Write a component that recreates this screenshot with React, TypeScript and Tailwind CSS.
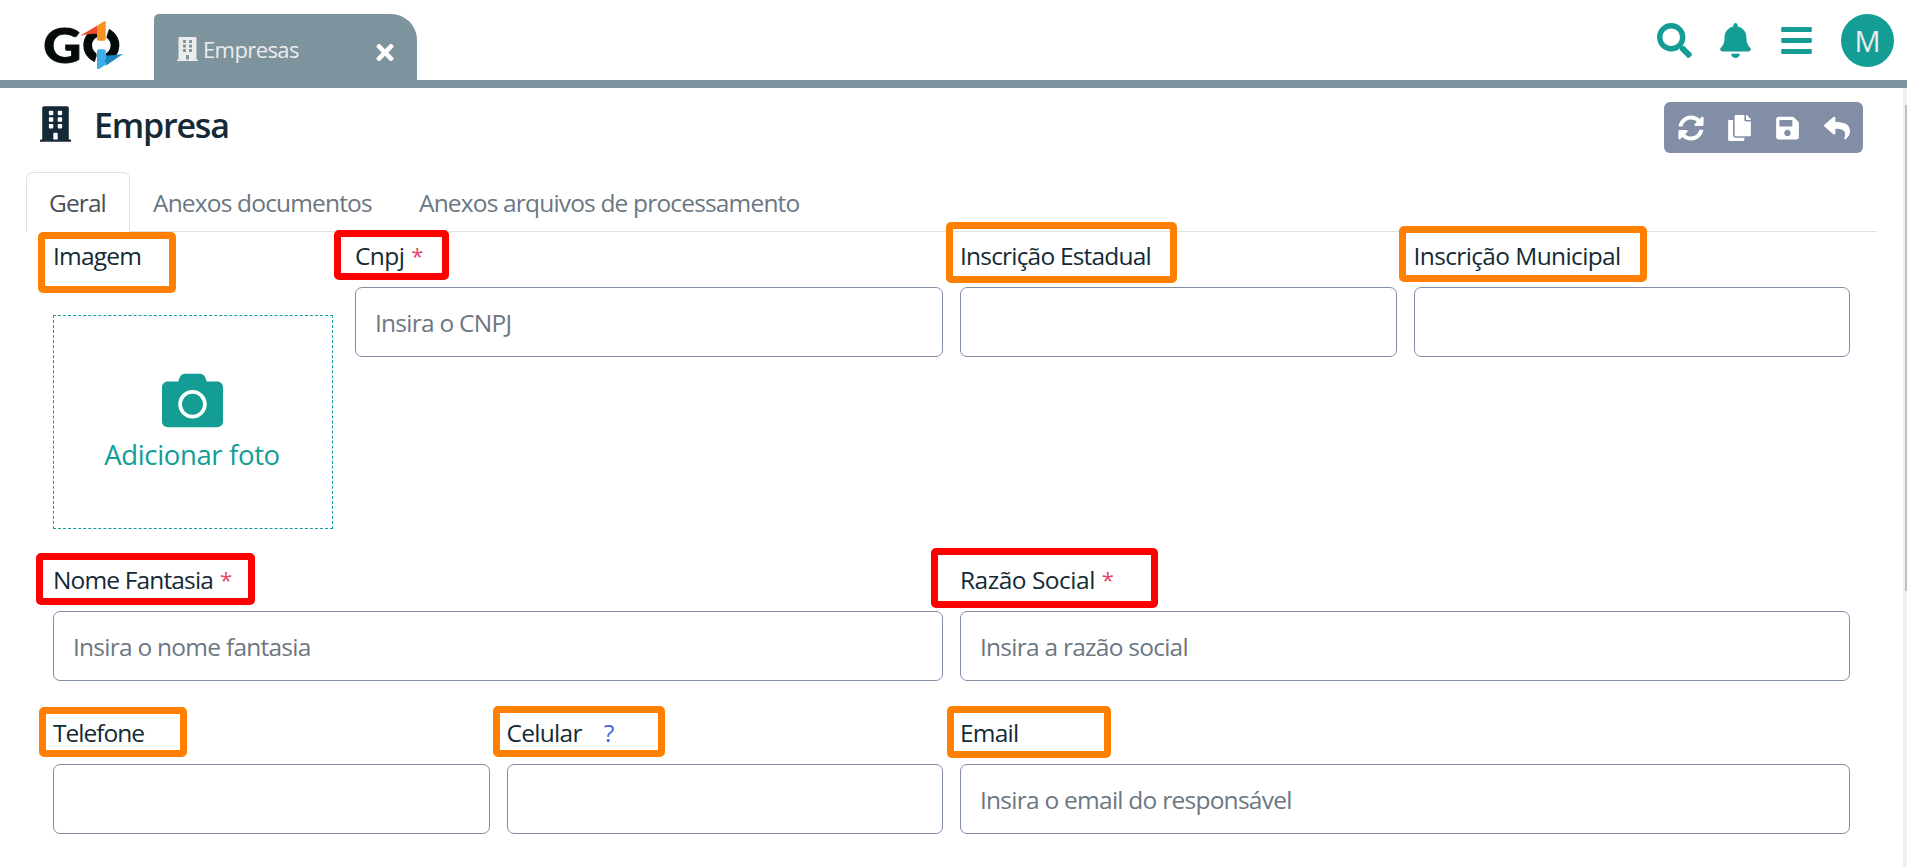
import type { ReactNode } from "react";
import {
  FaBars,
  FaBell,
  FaBuilding,
  FaCamera,
  FaCopy,
  FaReply,
  FaSave,
  FaSearch,
  FaSyncAlt,
  FaTimes,
} from "react-icons/fa";

function Logo() {
  return (
    <svg viewBox="0 0 330 240" className="ml-[29px] h-[80px] w-[110px] shrink-0">
      <g transform="translate(45 60)">
        <text
          x="-2"
          y="128"
          fontFamily="Lato, sans-serif"
          fontWeight="900"
          fontSize="144"
          textLength="114"
          lengthAdjust="spacingAndGlyphs"
          fill="#050a0b"
          stroke="#050a0b"
          strokeWidth="3"
        >
          G
        </text>
        <circle cx="172" cy="76" r="41" fill="none" stroke="#050a0b" strokeWidth="26" />
        <path d="M159 15H187L195 26L184 62H159Z" fill="#fff" />
        <path d="M156 88H185V118L159 140L150 132L158 108Z" fill="#fff" />
        <path d="M108 47L159 17V42Q140 40 108 47Z" fill="#ef4a2b" />
        <path d="M159 17L180 4Q185 2 185 7V57Q185 62 180 62H164Q159 62 159 57Z" fill="#f7931e" />
        <path d="M237 102L185 137V106Q210 107 237 102Z" fill="#1f86bd" />
        <path d="M159 93Q159 88 164 88H180Q185 88 185 93V134L166 146Q159 150 159 143Z" fill="#3fade6" />
      </g>
    </svg>
  );
}

type FieldProps = {
  label: string;
  mark: string;
  labelClass?: string;
  required?: boolean;
  help?: boolean;
  placeholder?: string;
  children?: ReactNode;
};

function Field({ label, mark, labelClass = "", required, help, placeholder, children }: FieldProps) {
  return (
    <div className="min-w-0 flex-1">
      <div className="relative flex h-[50px] text-[24.5px] leading-[37px] text-[#142a36]">
        <span className={`whitespace-nowrap ${labelClass}`}>{label}</span>
        {required && <span className="ml-[7px] text-[22px] text-[#e5446d]">*</span>}
        {help && <span className="ml-[22px] text-[#4169e1]">?</span>}
        <div className={`pointer-events-none absolute rounded-[5px] border-[7px] ${mark}`} />
      </div>
      {children ?? (
        <input
          placeholder={placeholder}
          className="block h-[70px] w-full rounded-[7px] border border-[#828ea6] bg-white px-[19px] pt-px text-[24.5px] tracking-[-0.75px] text-[#142a36] outline-none placeholder:text-[#6c7782] placeholder:opacity-100"
        />
      )}
    </div>
  );
}

export default function App() {
  return (
    <div className="flex h-[867px] w-full flex-col overflow-hidden bg-white font-['Open_Sans','Noto_Sans',sans-serif]">
      <header className="flex h-[88px] shrink-0 border-b-8 border-[#7d939e]">
        <Logo />
        <div className="ml-[15px] mt-[14px] flex h-[66px] w-[263px] items-center rounded-tl-[5px] rounded-tr-[26px] bg-[#7d939e] pl-[23px] pr-[23px] text-[#ececec]">
          <FaBuilding className="mt-[4px] h-[24px] w-[21px]" />
          <span className="ml-[5px] mt-[5px] text-[22px] tracking-[-0.6px]">Empresas</span>
          <FaTimes className="ml-auto mt-[10px] h-[25px] w-[18px] text-white" />
        </div>
        <div className="ml-auto flex h-[80px] items-center pr-[13px] text-[#139d94]">
          <FaSearch className="size-[35px]" />
          <FaBell className="ml-[28px] h-[35px] w-[31px]" />
          <FaBars className="ml-[30px] h-[35px] w-[31px]" />
          <div className="ml-[29px] flex size-[53px] items-center justify-center rounded-full bg-[#139d94] pt-[2px] text-[29px] text-[#ececec]">
            M
          </div>
        </div>
      </header>

      <div className="flex min-h-0 flex-1">
        <main className="min-w-0 flex-1">
          <div className="flex h-[84px] items-start pl-[40px] pr-[40px] pt-[14px]">
            <FaBuilding className="mt-[4px] h-[36px] w-[31px] text-[#142a36]" />
            <h1 className="ml-[23px] text-[34px] font-semibold leading-[46px] tracking-[-1.2px] text-[#142a36]">
              Empresa
            </h1>
            <div className="ml-auto flex h-[51px] w-[199px] items-center rounded-[6px] bg-[#828ea6] pl-[14px] text-white">
              <FaSyncAlt className="size-[26px]" />
              <FaCopy className="ml-[24px] h-[26px] w-[23px]" />
              <FaSave className="ml-[25px] h-[26px] w-[23px]" />
              <FaReply className="ml-[25px] size-[26px]" />
            </div>
          </div>

          <nav className="ml-[26px] mr-[26px] flex h-[60px] border-b border-[#dee2e6] text-[24.5px] leading-[34px] text-[#6c7782]">
            <span className="-mb-px h-[60px] w-[104px] rounded-t-[7px] border border-b-0 border-[#dee2e6] bg-white pl-[22px] pt-[13px] tracking-[-0.9px] text-[#495057]">
              Geral
            </span>
            <span className="ml-[23px] w-[220px] whitespace-nowrap pt-[14px] tracking-[-0.83px]">
              Anexos documentos
            </span>
            <span className="ml-[46px] whitespace-nowrap pt-[14px] tracking-[-0.83px]">
              Anexos arquivos de processamento
            </span>
          </nav>

          <form className="ml-[53px] mt-[5px] w-[1797px]">
            <div className="grid h-[324px] grid-cols-2 gap-[17px]">
              <div className="flex gap-[22px]">
                <div className="w-[280px] shrink-0">
                  <Field
                    label="Imagem"
                    labelClass="tracking-[-0.8px]"
                    mark="left-[-15px] top-[-5px] h-[61px] w-[138px] border-[#ff8000]"
                  >
                    <div className="mt-[28px] flex h-[214px] flex-col items-center border border-dashed border-[#139d94] pr-[2px] pt-[54px] text-[#139d94]">
                      <FaCamera className="size-[61px]" />
                      <span className="mt-[4px] text-[27.5px] leading-[40px] tracking-[-0.35px]">Adicionar foto</span>
                    </div>
                  </Field>
                </div>
                <Field
                  label="Cnpj"
                  required
                  labelClass="tracking-[-0.6px]"
                  placeholder="Insira o CNPJ"
                  mark="left-[-21px] top-[-7px] h-[50px] w-[115px] border-[#ff0000]"
                />
              </div>
              <div className="flex gap-[17px]">
                <Field
                  label="Inscrição Estadual"
                  labelClass="tracking-[-0.8px]"
                  mark="left-[-14px] top-[-15px] h-[61px] w-[231px] border-[#ff8000]"
                />
                <Field
                  label="Inscrição Municipal"
                  labelClass="tracking-[-0.62px]"
                  mark="left-[-15px] top-[-11px] h-[56px] w-[248px] border-[#ff8000]"
                />
              </div>
            </div>

            <div className="grid h-[153px] grid-cols-2 gap-[17px]">
              <Field
                label="Nome Fantasia"
                required
                labelClass="tracking-[-0.85px]"
                placeholder="Insira o nome fantasia"
                mark="left-[-17px] top-[-8px] h-[52px] w-[219px] border-[#ff0000]"
              />
              <Field
                label="Razão Social"
                required
                labelClass="tracking-[-0.5px]"
                placeholder="Insira a razão social"
                mark="left-[-29px] top-[-13px] h-[60px] w-[227px] border-[#ff0000]"
              />
            </div>

            <div className="grid grid-cols-2 gap-[17px]">
              <div className="flex gap-[17px]">
                <Field
                  label="Telefone"
                  labelClass="tracking-[-1px]"
                  mark="left-[-14px] top-[-7px] h-[50px] w-[148px] border-[#ff8000]"
                />
                <Field
                  label="Celular"
                  help
                  labelClass="tracking-[-0.7px]"
                  mark="left-[-14px] top-[-8px] h-[51px] w-[172px] border-[#ff8000]"
                />
              </div>
              <Field
                label="Email"
                labelClass="tracking-[-0.8px]"
                placeholder="Insira o email do responsável"
                mark="left-[-13px] top-[-8px] h-[52px] w-[164px] border-[#ff8000]"
              />
            </div>
          </form>
        </main>

        <div className="w-[4px] shrink-0 bg-[#f0f0f0] pl-[2px] pt-[17px]">
          <div className="h-[486px] bg-[#c1c1c1]" />
        </div>
      </div>
    </div>
  );
}
